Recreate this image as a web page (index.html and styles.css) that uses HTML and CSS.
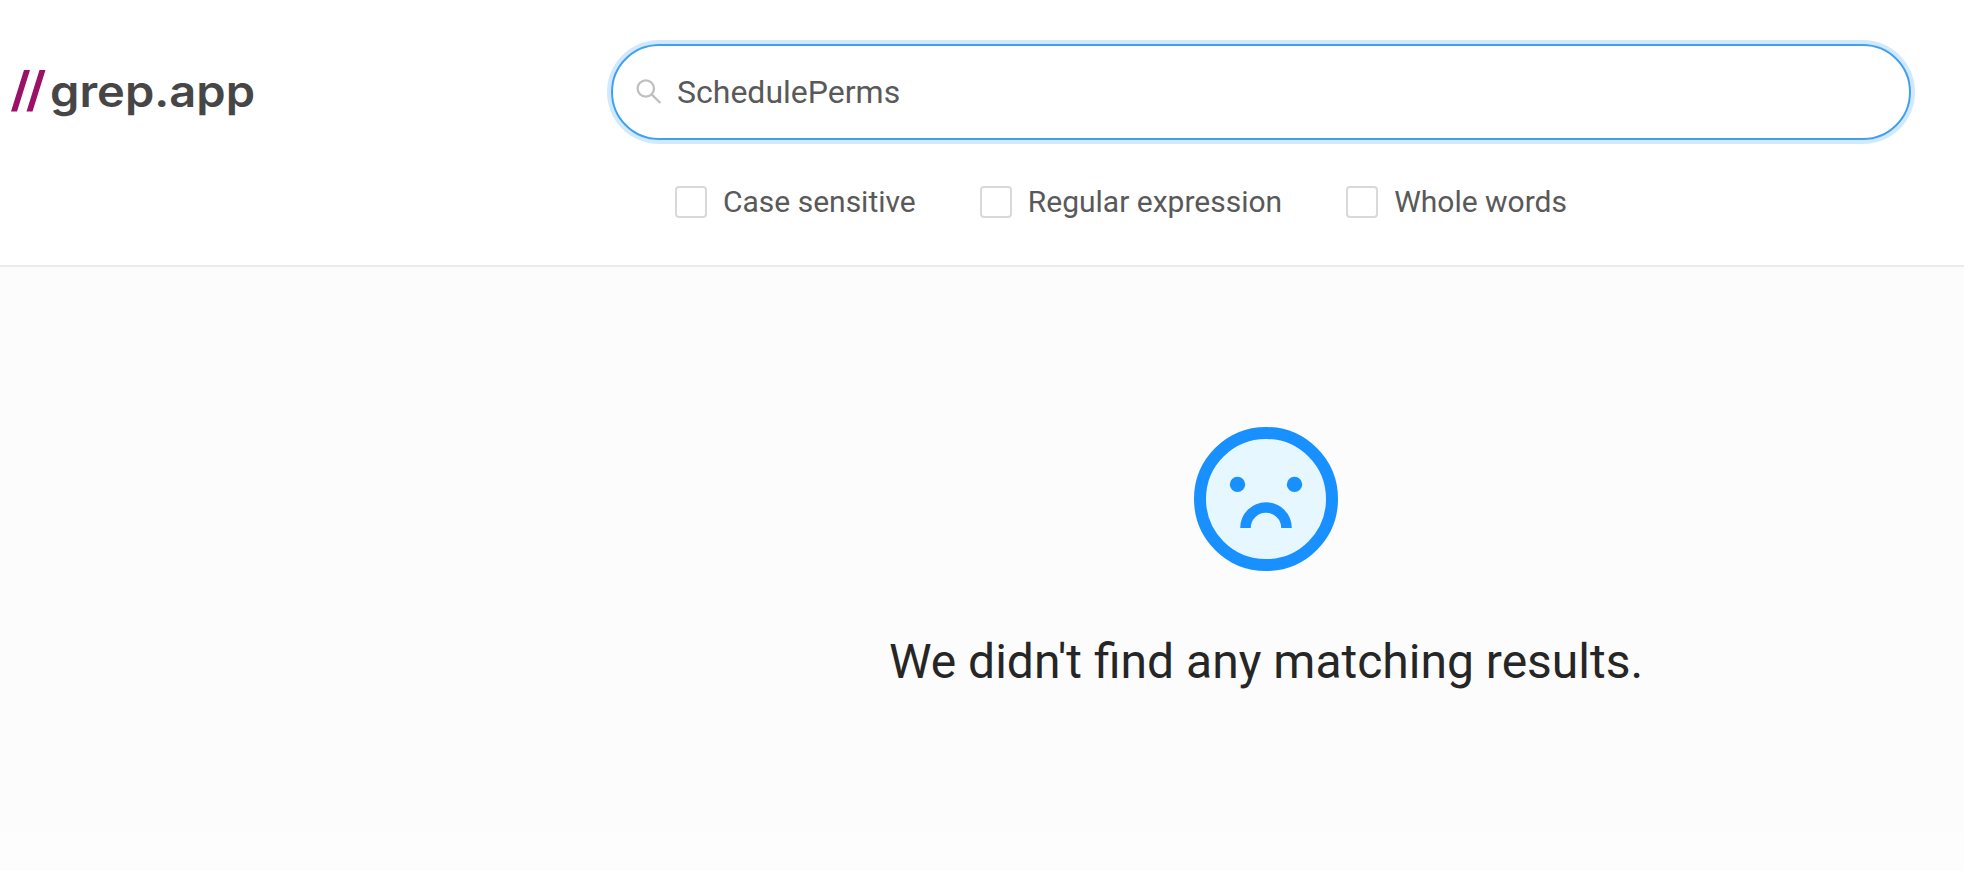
FILE: index.html
```
<!DOCTYPE html>
<html lang="en">
<head>
  <meta charset="UTF-8">
  <meta name="viewport" content="width=device-width, initial-scale=1.0">
  <title>grep.app</title>
  <link rel="stylesheet" href="styles.css">
</head>
<body>
  <header class="header">
    <a class="logo">
      <svg width="270" height="60" viewBox="0 0 270 60">
        <path class="slash" d="M24 10h6L17 51.5h-6zM39.5 10h6l-13 41.5h-6z"/>
        <text x="50" y="46.5" textLength="205" lengthAdjust="spacingAndGlyphs">grep.app</text>
      </svg>
    </a>
    <div class="search">
      <label class="search-box">
        <svg class="search-icon" width="26" height="26" viewBox="0 0 26 26">
          <circle cx="9.8" cy="9.5" r="8.2"/>
          <path d="M15.6 15.4L24.4 24"/>
        </svg>
        <input class="search-input" type="text" value="SchedulePerms" spellcheck="false">
      </label>
      <div class="options">
        <label class="option"><span class="checkbox"></span>Case sensitive</label>
        <label class="option"><span class="checkbox"></span>Regular expression</label>
        <label class="option"><span class="checkbox"></span>Whole words</label>
      </div>
    </div>
  </header>

  <main class="content">
    <div class="empty">
      <svg class="face" width="144" height="144" viewBox="0 0 144 144">
        <circle class="head" cx="72" cy="72" r="66"/>
        <circle class="eye" cx="43.5" cy="57.4" r="7.7"/>
        <circle class="eye" cx="100.5" cy="57.4" r="7.7"/>
        <path class="mouth" d="M51.5 101a20.5 20.5 0 0 1 41 0"/>
      </svg>
      <h1 class="message">We didn't find any matching results.</h1>
    </div>
  </main>

  <footer class="footer"></footer>
</body>
</html>
```
FILE: styles.css
```
* {
  box-sizing: border-box;
}

body {
  margin: 0;
  height: 100vh;
  display: flex;
  flex-direction: column;
  overflow: hidden;
  background-color: #fdfdfd;
  color: #595959;
  font-family: Roboto, sans-serif;
}

.header {
  display: flex;
  height: 267px;
  flex-shrink: 0;
  background-color: #ffffff;
  border-bottom: 2px solid #ebebeb;
}

.logo {
  width: 611px;
  padding-top: 60px;
}

.logo svg {
  display: block;
}

.logo .slash {
  fill: #9b1168;
}

.logo text {
  fill: #464646;
  font-family: Inter, sans-serif;
  font-size: 43px;
  font-weight: 600;
}

.search {
  width: 1300px;
  padding-top: 44px;
}

.search-box {
  display: flex;
  align-items: center;
  height: 96px;
  padding: 0 24px 0 23px;
  border: 2px solid #40a0f0;
  border-radius: 48px;
  box-shadow: 0 0 0 4px rgba(24, 144, 255, 0.2);
}

.search-icon {
  margin-right: 15px;
  fill: none;
  stroke: #bfbfbf;
  stroke-width: 2.3;
}

.search-input {
  flex: 1;
  padding: 0;
  border: 0;
  outline: 0;
  background: none;
  color: #595959;
  font-family: inherit;
  font-size: 32px;
}

.options {
  display: flex;
  gap: 64px;
  margin-top: 46px;
  padding-left: 64px;
}

.option {
  display: flex;
  align-items: center;
  gap: 16px;
  height: 32px;
  font-size: 30px;
  line-height: 34px;
  white-space: nowrap;
}

.checkbox {
  width: 32px;
  height: 32px;
  border: 2px solid #d9d9d9;
  border-radius: 4px;
  background-color: #ffffff;
}

.content {
  height: 565px;
  flex-shrink: 0;
  background-color: #fcfcfc;
}

.empty {
  display: flex;
  flex-direction: column;
  align-items: center;
  width: 1300px;
  margin-left: 616px;
  padding-top: 160px;
}

.face .head {
  fill: #e6f7ff;
  stroke: #1890ff;
  stroke-width: 12;
}

.face .eye {
  fill: #1890ff;
}

.face .mouth {
  fill: none;
  stroke: #1890ff;
  stroke-width: 10.5;
}

.message {
  margin: 53px 0 0;
  color: #262626;
  font-size: 48px;
  font-weight: 400;
  line-height: 76px;
}

.footer {
  flex: 1;
}
```
